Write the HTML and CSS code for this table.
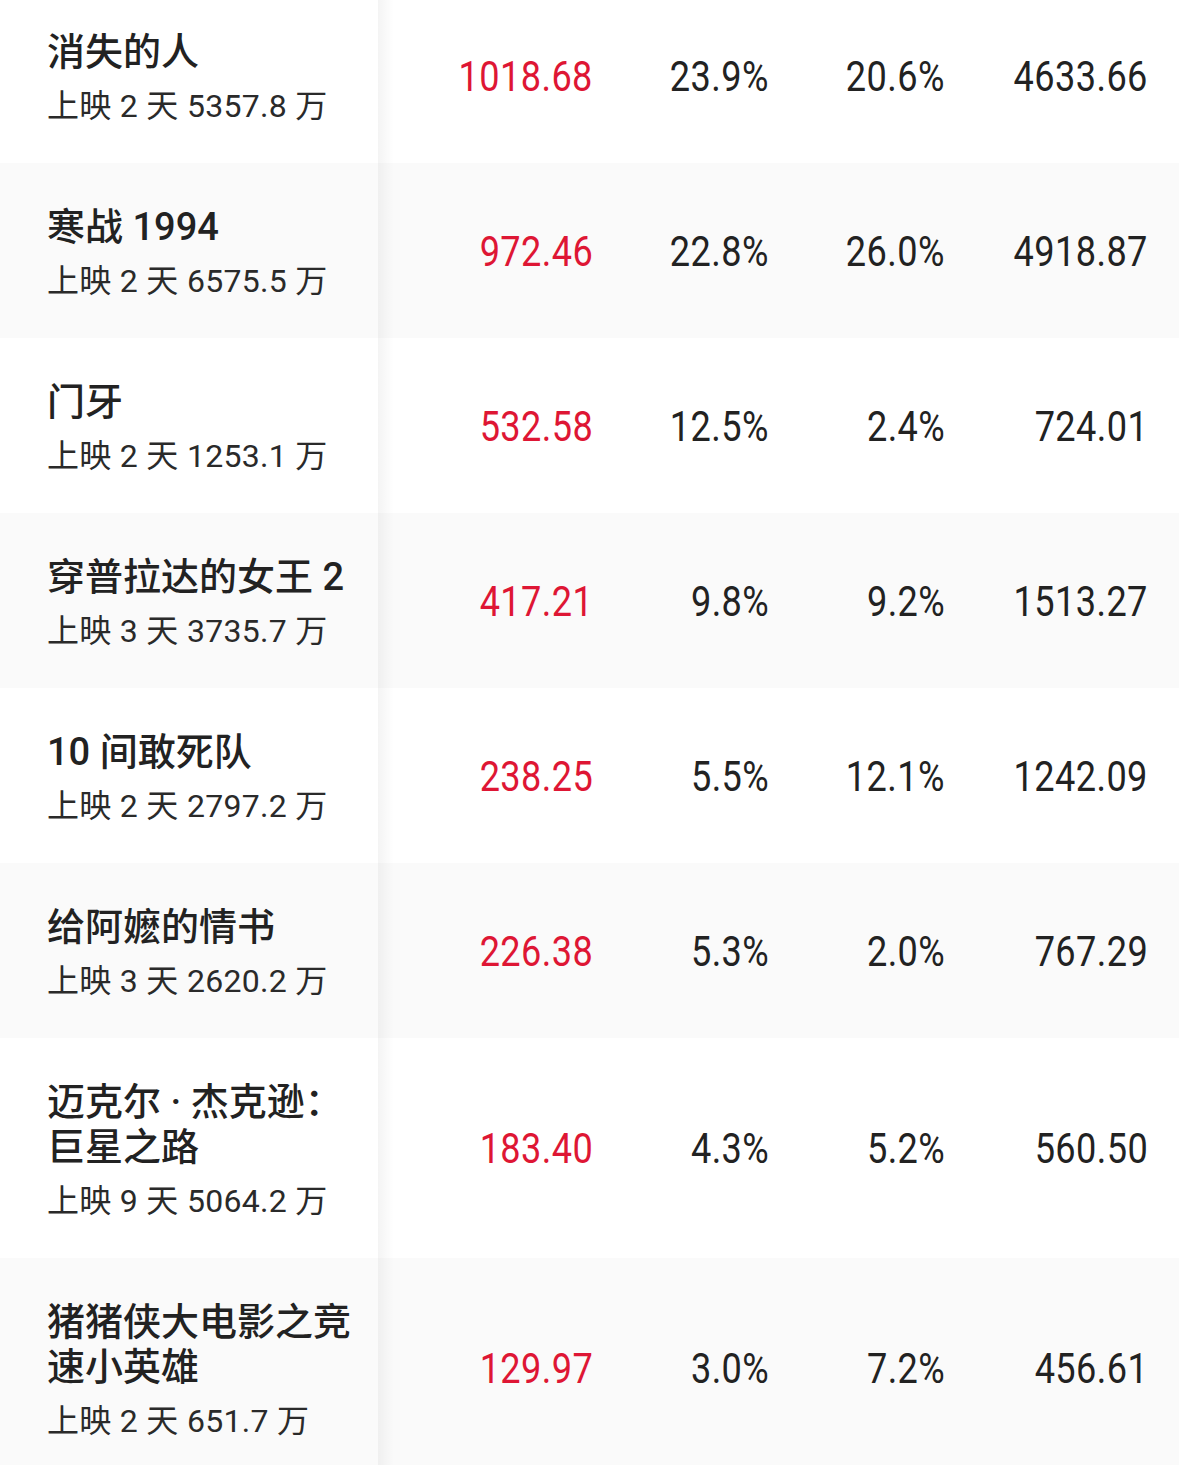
FILE: index.html
```html
<!DOCTYPE html>
<html lang="zh-CN">
<head>
<meta charset="utf-8">
<link rel="stylesheet" href="styles.css">
</head>
<body>
<div class="table">
  <div class="row">
    <div class="name"><div class="title">消失的人</div><div class="sub">上映 2 天 5357.8 万</div></div>
    <div class="num red"><span>1018.68</span></div><div class="num"><span>23.9%</span></div><div class="num"><span>20.6%</span></div><div class="num last"><span>4633.66</span></div>
  </div>
  <div class="row">
    <div class="name"><div class="title">寒战 1994</div><div class="sub">上映 2 天 6575.5 万</div></div>
    <div class="num red"><span>972.46</span></div><div class="num"><span>22.8%</span></div><div class="num"><span>26.0%</span></div><div class="num last"><span>4918.87</span></div>
  </div>
  <div class="row">
    <div class="name"><div class="title">门牙</div><div class="sub">上映 2 天 1253.1 万</div></div>
    <div class="num red"><span>532.58</span></div><div class="num"><span>12.5%</span></div><div class="num"><span>2.4%</span></div><div class="num last"><span>724.01</span></div>
  </div>
  <div class="row">
    <div class="name"><div class="title">穿普拉达的女王 2</div><div class="sub">上映 3 天 3735.7 万</div></div>
    <div class="num red"><span>417.21</span></div><div class="num"><span>9.8%</span></div><div class="num"><span>9.2%</span></div><div class="num last"><span>1513.27</span></div>
  </div>
  <div class="row">
    <div class="name"><div class="title">10 间敢死队</div><div class="sub">上映 2 天 2797.2 万</div></div>
    <div class="num red"><span>238.25</span></div><div class="num"><span>5.5%</span></div><div class="num"><span>12.1%</span></div><div class="num last"><span>1242.09</span></div>
  </div>
  <div class="row">
    <div class="name"><div class="title">给阿嬷的情书</div><div class="sub">上映 3 天 2620.2 万</div></div>
    <div class="num red"><span>226.38</span></div><div class="num"><span>5.3%</span></div><div class="num"><span>2.0%</span></div><div class="num last"><span>767.29</span></div>
  </div>
  <div class="row">
    <div class="name"><div class="title">迈克尔 · 杰克逊：巨星之路</div><div class="sub">上映 9 天 5064.2 万</div></div>
    <div class="num red"><span>183.40</span></div><div class="num"><span>4.3%</span></div><div class="num"><span>5.2%</span></div><div class="num last"><span>560.50</span></div>
  </div>
  <div class="row">
    <div class="name"><div class="title">猪猪侠大电影之竞速小英雄</div><div class="sub">上映 2 天 651.7 万</div></div>
    <div class="num red"><span>129.97</span></div><div class="num"><span>3.0%</span></div><div class="num"><span>7.2%</span></div><div class="num last"><span>456.61</span></div>
  </div>
</div>
</body>
</html>
```

FILE: styles.css
```css
html, body {
  margin: 0;
  padding: 0;
  background: #ffffff;
}

body {
  font-family: "Roboto", "Noto Sans CJK SC", sans-serif;
  color: #222222;
  overflow: hidden;
}

.table {
  margin-top: -12px;
}

.row {
  display: grid;
  grid-template-columns: 378px 215px 176px 176px 1fr;
  align-items: stretch;
  background: #ffffff;
}

.row:nth-child(even) {
  background: #fafafa;
}

.name {
  padding: 42px 18px 36px 47px;
  display: flex;
  flex-direction: column;
  justify-content: center;
}

.title {
  font-size: 38px;
  font-weight: 500;
  line-height: 45px;
  color: #222222;
}

.sub {
  margin-top: 10px;
  font-size: 32px;
  font-weight: 400;
  line-height: 42px;
  letter-spacing: 0.3px;
  color: #2a2a2a;
}

.num {
  display: flex;
  align-items: center;
  justify-content: flex-end;
  font-family: "Roboto", sans-serif;
  font-size: 43px;
  font-weight: 400;
  color: #222222;
}

.num span {
  display: inline-block;
  transform: scaleX(0.84);
  transform-origin: right center;
  letter-spacing: 0.5px;
}

.num.red {
  color: #de1634;
  background-image: linear-gradient(to right, rgba(0, 0, 0, 0.045), rgba(0, 0, 0, 0) 16px);
}

.num.last {
  padding-right: 31px;
}
```
